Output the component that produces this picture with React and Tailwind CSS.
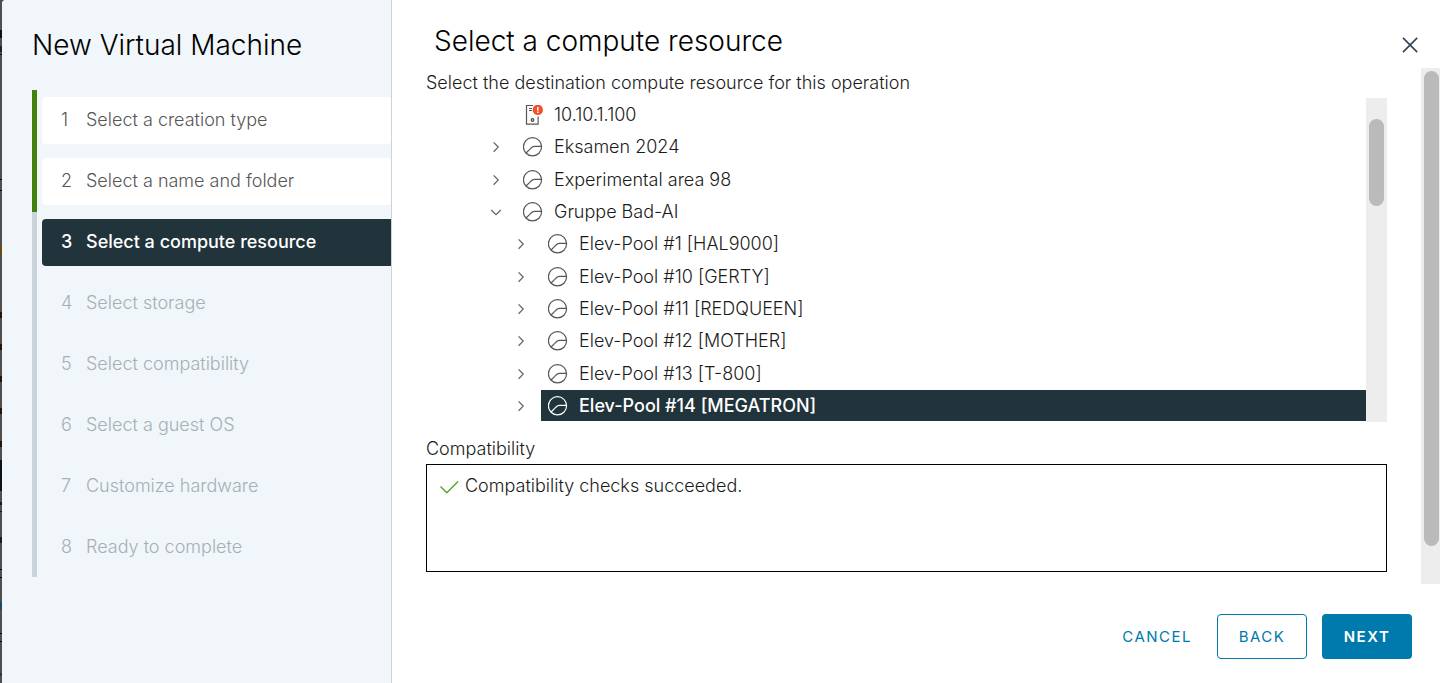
const steps = [
  'Select a creation type',
  'Select a name and folder',
  'Select a compute resource',
  'Select storage',
  'Select compatibility',
  'Select a guest OS',
  'Customize hardware',
  'Ready to complete',
];
const current = 2;

const tree = [
  { label: '10.10.1.100', level: 0, kind: 'host' },
  { label: 'Eksamen 2024', level: 0, kind: 'pool' },
  { label: 'Experimental area 98', level: 0, kind: 'pool' },
  { label: 'Gruppe Bad-AI', level: 0, kind: 'pool', open: true },
  { label: 'Elev-Pool #1 [HAL9000]', level: 1, kind: 'pool' },
  { label: 'Elev-Pool #10 [GERTY]', level: 1, kind: 'pool' },
  { label: 'Elev-Pool #11 [REDQUEEN]', level: 1, kind: 'pool' },
  { label: 'Elev-Pool #12 [MOTHER]', level: 1, kind: 'pool' },
  { label: 'Elev-Pool #13 [T-800]', level: 1, kind: 'pool' },
  { label: 'Elev-Pool #14 [MEGATRON]', level: 1, kind: 'pool', selected: true },
];

// Sliver of the dimmed page that shows beside the dialog.
const backdropMarks = [
  [30, 8, '#111'],
  [46, 6, '#222'],
  [54, 1, '#111'],
  [179, 1, '#000'],
  [190, 1, '#000'],
  [246, 8, '#6b4a12'],
  [283, 2, '#2c5566'],
  [312, 6, '#2a1208'],
  [344, 6, '#2a1208'],
  [376, 6, '#2a1208'],
  [408, 6, '#2a1208'],
  [441, 6, '#2a1208'],
  [460, 31, '#0a1418'],
  [502, 3, '#181818'],
  [511, 1, '#101828'],
  [537, 6, '#151a26'],
  [569, 1, '#000'],
  [577, 1, '#000'],
  [602, 8, '#1f4a66'],
  [633, 1, '#000'],
  [641, 1, '#000'],
  [673, 3, '#1f3a52'],
];

function Backdrop() {
  return (
    <svg className="absolute top-0 left-0" width="2" height="683" aria-hidden="true">
      {backdropMarks.map(([y, h, fill]) => (
        <rect key={y} x="0" y={y} width="2" height={h} fill={fill} />
      ))}
    </svg>
  );
}

function Caret({ open }) {
  return (
    <svg className="size-4" viewBox="0 0 16 16" fill="none" stroke="#666" strokeWidth="1.3" aria-hidden="true">
      <path d={open ? 'M3.2 6l4.8 4.6L12.8 6' : 'M5.6 3.4l4.6 4.7-4.6 4.7'} />
    </svg>
  );
}

function PoolIcon() {
  return (
    <svg className="size-5 shrink-0" viewBox="0 0 20 20" fill="none" stroke="currentColor" strokeWidth="1.2" aria-hidden="true">
      <circle cx="9.5" cy="9.8" r="9.1" />
      <path d="M3.1 16l3.6-3.6c1.6-1.9 2.6-3 4.4-3h7.4" />
    </svg>
  );
}

function HostIcon() {
  return (
    <svg className="size-5 shrink-0" viewBox="0 0 20 20" fill="none" aria-hidden="true">
      <path d="M10 .5H3.5v18.6h11.6V11.5" stroke="#565656" strokeWidth="1.2" />
      <path d="M6 3.5h3M6 5.5h3" stroke="#565656" strokeWidth="1" />
      <circle cx="9.5" cy="15" r="1.3" stroke="#454545" strokeWidth="1.2" />
      <circle cx="14.8" cy="4.9" r="5.2" fill="#f54f2e" />
      <path d="M14.8 1.9v3.8M14.8 6.6v1.5" stroke="#fff" strokeWidth="1.4" />
    </svg>
  );
}

function TreeRow({ item }) {
  return (
    <li className={`flex flex-1 items-center ${item.level ? 'pl-[87px]' : 'pl-[62px]'}`}>
      <span className="flex w-7 shrink-0 items-center">
        {item.kind === 'pool' && (
          <button type="button" aria-label={`Toggle ${item.label}`}>
            <Caret open={item.open} />
          </button>
        )}
      </span>
      <button
        type="button"
        className={`flex h-[31px] flex-1 items-center gap-[11px] pl-[7px] text-left ${
          item.selected ? 'bg-[#21333b] font-medium text-white' : 'text-[#565656]'
        }`}
      >
        {item.kind === 'host' ? <HostIcon /> : <PoolIcon />}
        <span className={item.selected ? '' : 'text-[#1b1b1b]'}>{item.label}</span>
      </button>
    </li>
  );
}

export default function App() {
  return (
    <div className="relative min-h-screen overflow-hidden bg-[#4f4f4f] pl-0.5 font-['Inter',sans-serif] text-[18px] leading-6 font-light text-[#1b1b1b]">
      <Backdrop />
      <div className="flex min-h-screen overflow-hidden rounded-tl bg-white">
        <aside className="w-[390px] shrink-0 border-r border-[#ccd4db] bg-[#f0f6f9] pl-[30px]">
          <h1 className="pt-[29px] text-[28px] leading-8 text-black">New Virtual Machine</h1>
          <ol className="mt-[29px] flex h-[487px] flex-col">
            {steps.map((label, i) => (
              <li
                key={label}
                className={`flex-1 border-l-[5px] py-[7px] pl-[5px] ${i < current ? 'border-[#42810e]' : 'border-[#ccd4db]'}`}
              >
                <button
                  type="button"
                  aria-current={i === current ? 'step' : undefined}
                  className={`flex h-full w-full items-center text-left ${
                    i < current
                      ? 'rounded bg-white text-[#565656]'
                      : i === current
                        ? 'rounded-l bg-[#21333b] font-medium text-white'
                        : 'text-[#a6b0b5]'
                  }`}
                >
                  <span className="w-11 pl-[19px]">{i + 1}</span>
                  <span>{label}</span>
                </button>
              </li>
            ))}
          </ol>
        </aside>

        <main className="flex min-w-0 flex-1 flex-col">
          <header className="flex h-[68px] justify-between pr-5 pl-[42px]">
            <h2 className="pt-[25px] text-[28px] leading-8 text-black">Select a compute resource</h2>
            <button type="button" aria-label="Close" className="mt-[34px] h-5">
              <svg className="size-5" viewBox="0 0 20 20" fill="none" stroke="#314351" strokeWidth="1.6" aria-hidden="true">
                <path d="M3 3.9l14.2 14.2M17.2 3.9L3 18.1" />
              </svg>
            </button>
          </header>

          <div className="flex">
            <div className="min-w-0 flex-1 px-[34px]">
              <p className="py-[3px]">Select the destination compute resource for this operation</p>
              <div className="flex h-[324px] overflow-hidden">
                <ul className="flex flex-1 flex-col pt-px">
                  {tree.map((item) => (
                    <TreeRow key={item.label} item={item} />
                  ))}
                </ul>
                <div className="w-[21px] bg-[#ededed] px-[3px] pt-[21px]">
                  <div className="h-[87px] rounded-full bg-[#bababa]" />
                </div>
              </div>
              <h3 className="pt-[15px] pb-[3px]">Compatibility</h3>
              <div className="flex h-[108px] items-start gap-1.5 border border-black px-3 py-[9px]">
                <svg className="mt-0.5 size-5" viewBox="0 0 20 20" fill="none" stroke="#5aa220" strokeWidth="1.4" aria-hidden="true">
                  <path d="M1.5 10.5l6.3 6.2L19 5.5" />
                </svg>
                <span>Compatibility checks succeeded.</span>
              </div>
            </div>
            <div className="h-[516px] w-[19px] shrink-0 bg-[#ededed] pt-[3px] pr-px pl-[3px]">
              <div className="h-[475px] rounded-full bg-[#bababa]" />
            </div>
          </div>

          <footer className="flex justify-end gap-[15px] pt-[30px] pr-7 text-[15px] tracking-widest">
            <button type="button" className="h-[45px] px-2.5 font-normal text-[#0079ad]">CANCEL</button>
            <button type="button" className="h-[45px] w-[90px] rounded border border-[#0079ad] font-normal text-[#0079ad]">BACK</button>
            <button type="button" className="h-[45px] w-[90px] rounded bg-[#0079ad] font-semibold text-white">NEXT</button>
          </footer>
        </main>
      </div>
    </div>
  );
}
